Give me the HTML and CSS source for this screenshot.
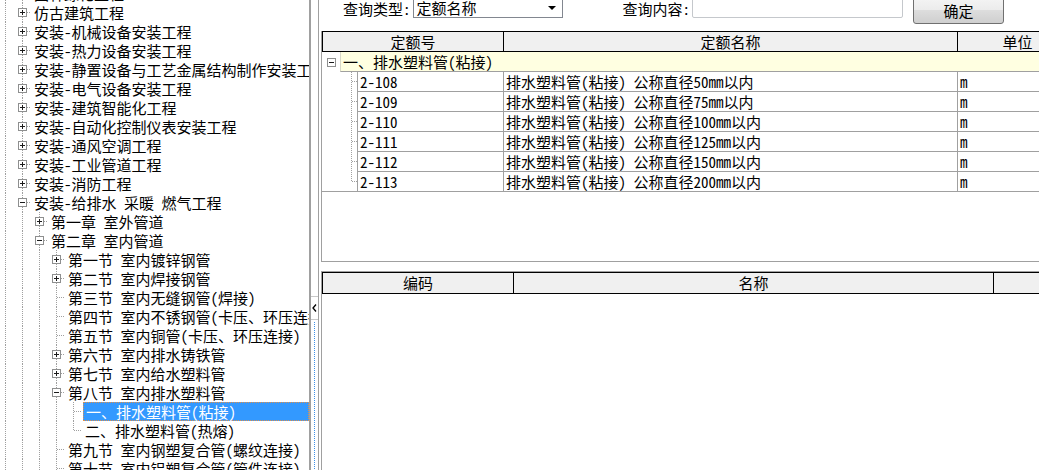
FILE: index.html
```html
<!DOCTYPE html>
<html lang="zh-CN">

<head>
    <meta charset="UTF-8">
    <title>定额查询</title>
    <link rel="stylesheet" href="styles.css">
</head>

<body>
    <div class="app">

        <div class="tree">
            <div class="tree-list">
                <div class="node"><span class="g root line"></span><span class="x more"><span class="b plus"></span></span><span class="t">园林绿化工程</span></div>
                <div class="node"><span class="g root line"></span><span class="x more"><span class="b plus"></span></span><span class="t">仿古建筑工程</span></div>
                <div class="node"><span class="g root line"></span><span class="x more"><span class="b plus"></span></span><span class="t">安装-机械设备安装工程</span></div>
                <div class="node"><span class="g root line"></span><span class="x more"><span class="b plus"></span></span><span class="t">安装-热力设备安装工程</span></div>
                <div class="node"><span class="g root line"></span><span class="x more"><span class="b plus"></span></span><span class="t">安装-静置设备与工艺金属结构制作安装工程</span></div>
                <div class="node"><span class="g root line"></span><span class="x more"><span class="b plus"></span></span><span class="t">安装-电气设备安装工程</span></div>
                <div class="node"><span class="g root line"></span><span class="x more"><span class="b plus"></span></span><span class="t">安装-建筑智能化工程</span></div>
                <div class="node"><span class="g root line"></span><span class="x more"><span class="b plus"></span></span><span class="t">安装-自动化控制仪表安装工程</span></div>
                <div class="node"><span class="g root line"></span><span class="x more"><span class="b plus"></span></span><span class="t">安装-通风空调工程</span></div>
                <div class="node"><span class="g root line"></span><span class="x more"><span class="b plus"></span></span><span class="t">安装-工业管道工程</span></div>
                <div class="node"><span class="g root line"></span><span class="x more"><span class="b plus"></span></span><span class="t">安装-消防工程</span></div>
                <div class="node"><span class="g root line"></span><span class="x more"><span class="b"></span></span><span class="t">安装-给排水 采暖 燃气工程</span></div>

                <div class="node"><span class="g root line"></span><span class="g line"></span><span class="x more"><span class="b plus"></span></span><span class="t">第一章 室外管道</span></div>
                <div class="node"><span class="g root line"></span><span class="g line"></span><span class="x more"><span class="b"></span></span><span class="t">第二章 室内管道</span></div>

                <div class="node"><span class="g root line"></span><span class="g line"></span><span class="g line"></span><span class="x more"><span class="b plus"></span></span><span class="t">第一节 室内镀锌钢管</span></div>
                <div class="node"><span class="g root line"></span><span class="g line"></span><span class="g line"></span><span class="x more"><span class="b plus"></span></span><span class="t">第二节 室内焊接钢管</span></div>
                <div class="node"><span class="g root line"></span><span class="g line"></span><span class="g line"></span><span class="x more"></span><span class="t">第三节 室内无缝钢管(焊接)</span></div>
                <div class="node"><span class="g root line"></span><span class="g line"></span><span class="g line"></span><span class="x more"></span><span class="t">第四节 室内不锈钢管(卡压、环压连接)</span></div>
                <div class="node"><span class="g root line"></span><span class="g line"></span><span class="g line"></span><span class="x more"></span><span class="t">第五节 室内铜管(卡压、环压连接)</span></div>
                <div class="node"><span class="g root line"></span><span class="g line"></span><span class="g line"></span><span class="x more"><span class="b plus"></span></span><span class="t">第六节 室内排水铸铁管</span></div>
                <div class="node"><span class="g root line"></span><span class="g line"></span><span class="g line"></span><span class="x more"><span class="b plus"></span></span><span class="t">第七节 室内给水塑料管</span></div>
                <div class="node"><span class="g root line"></span><span class="g line"></span><span class="g line"></span><span class="x more"><span class="b"></span></span><span class="t">第八节 室内排水塑料管</span></div>

                <div class="node"><span class="g root line"></span><span class="g line"></span><span class="g line"></span><span class="g line"></span><span class="x more"></span><span class="t sel">一、排水塑料管(粘接)</span></div>
                <div class="node"><span class="g root line"></span><span class="g line"></span><span class="g line"></span><span class="g line"></span><span class="x"></span><span class="t">二、排水塑料管(热熔)</span></div>

                <div class="node"><span class="g root line"></span><span class="g line"></span><span class="g line"></span><span class="x more"></span><span class="t">第九节 室内钢塑复合管(螺纹连接)</span></div>
                <div class="node"><span class="g root line"></span><span class="g line"></span><span class="g line"></span><span class="x more"></span><span class="t">第十节 室内铝塑复合管(管件连接)</span></div>
            </div>
        </div>

        <div class="split">
            <div class="split-top"></div>
            <div class="collapse">
                <svg width="5" height="8" viewBox="0 0 5 8"><path d="M4 0.5 L1 4 L4 7.5" fill="none" stroke="#000" stroke-width="1.3" /></svg>
            </div>
            <div class="dots"></div>
        </div>

        <div class="main">
            <div class="query">
                <span class="q-label">查询类型:</span>
                <div class="select">
                    <span class="select-text">定额名称</span>
                    <span class="arrow"></span>
                </div>
                <span class="q-label second">查询内容:</span>
                <div class="input"></div>
                <div class="btn">确定</div>
            </div>

            <div class="upper">
                <div class="thead">
                    <div class="th">定额号</div>
                    <div class="th">定额名称</div>
                    <div class="th">单位</div>
                </div>
                <div class="grp">
                    <div class="gx"><span class="b"></span></div>
                    <div class="gname">一、排水塑料管(粘接)</div>
                </div>
                <div class="row"><div class="tr more"></div><div class="td">2-108</div><div class="td">排水塑料管(粘接) 公称直径50mm以内</div><div class="td">m</div></div>
                <div class="row"><div class="tr more"></div><div class="td">2-109</div><div class="td">排水塑料管(粘接) 公称直径75mm以内</div><div class="td">m</div></div>
                <div class="row"><div class="tr more"></div><div class="td">2-110</div><div class="td">排水塑料管(粘接) 公称直径100mm以内</div><div class="td">m</div></div>
                <div class="row"><div class="tr more"></div><div class="td">2-111</div><div class="td">排水塑料管(粘接) 公称直径125mm以内</div><div class="td">m</div></div>
                <div class="row"><div class="tr more"></div><div class="td">2-112</div><div class="td">排水塑料管(粘接) 公称直径150mm以内</div><div class="td">m</div></div>
                <div class="row last"><div class="tr"></div><div class="td">2-113</div><div class="td">排水塑料管(粘接) 公称直径200mm以内</div><div class="td">m</div></div>
            </div>

            <div class="lower">
                <div class="lhead">
                    <div class="th">编码</div>
                    <div class="th">名称</div>
                    <div class="th"></div>
                </div>
            </div>
        </div>

    </div>
</body>

</html>
```

FILE: styles.css
```css
* {
    margin: 0;
    padding: 0;
    box-sizing: border-box;
}

body {
    width: 1039px;
    height: 470px;
    overflow: hidden;
    background: #fff;
    color: #000;
    font-family: "Noto Sans Mono CJK SC", "Noto Sans CJK SC", sans-serif;
    font-size: 15px;
}

.app {
    display: flex;
    height: 470px;
}

/* left tree */
.tree {
    width: 309px;
    flex: none;
    overflow: hidden;
}

.tree-list {
    margin-top: -16px;
}

.node {
    display: flex;
    height: 19px;
    line-height: 19px;
    white-space: pre;
}

.g {
    flex: none;
    width: 17px;
    height: 19px;
}

.g.root {
    width: 14px;
}

.g.line {
    background: repeating-linear-gradient(to bottom, #a0a0a0 0 1px, transparent 1px 2px) 8px 0 / 1px 100% no-repeat;
}

.g.root.line {
    background-position: 5px 0;
}

.x {
    flex: none;
    width: 17px;
    height: 19px;
    display: flex;
    align-items: center;
    justify-content: center;
    background:
        repeating-linear-gradient(to bottom, #a0a0a0 0 1px, transparent 1px 2px) 8px 0 / 1px 10px no-repeat,
        repeating-linear-gradient(to right, #a0a0a0 0 1px, transparent 1px 2px) 9px 9px / 8px 1px no-repeat;
}

.x.more {
    background:
        repeating-linear-gradient(to bottom, #a0a0a0 0 1px, transparent 1px 2px) 8px 0 / 1px 100% no-repeat,
        repeating-linear-gradient(to right, #a0a0a0 0 1px, transparent 1px 2px) 9px 9px / 8px 1px no-repeat;
}

.b {
    width: 9px;
    height: 9px;
    flex: none;
    border: 1px solid #8e8f8f;
    background: linear-gradient(#1c1c1c, #1c1c1c) center / 5px 1px no-repeat, #fff;
}

.b.plus {
    background:
        linear-gradient(#1c1c1c, #1c1c1c) center / 5px 1px no-repeat,
        linear-gradient(#1c1c1c, #1c1c1c) center / 1px 5px no-repeat,
        #fff;
}

.t {
    flex: none;
    padding: 0 2px 0 3px;
}

.t.sel {
    flex: 1;
    margin-left: 1px;
    padding-left: 2px;
    background: #3399ff;
    color: #fff;
    border: 1px dotted #e0904a;
    line-height: 17px;
}

/* splitter */
.split {
    width: 10px;
    flex: none;
    border-left: 2px solid #a0a0a0;
    border-right: 1px solid #a0a0a0;
    display: flex;
    flex-direction: column;
}

.split-top {
    height: 296px;
}

.collapse {
    height: 24px;
    border-top: 1px solid #c8c8c8;
    border-bottom: 1px solid #c8c8c8;
    display: flex;
    align-items: center;
    justify-content: center;
}

.dots {
    flex: 1;
    background: repeating-linear-gradient(to bottom, #3c8fe8 0 1px, transparent 1px 2px) 3px 2px / 1px 100% no-repeat;
}

/* right side */
.main {
    flex: 1;
    min-width: 0;
    display: flex;
    flex-direction: column;
    overflow: hidden;
    padding-left: 2px;
}

.query {
    height: 34px;
    margin-top: -3px;
    flex: none;
    display: flex;
    align-items: flex-start;
    padding-left: 22px;
}

.q-label {
    line-height: 24px;
    margin-right: 2px;
    white-space: nowrap;
}

.q-label.second {
    margin-left: 60px;
}

.select {
    width: 150px;
    height: 20px;
    margin-top: 1px;
    border: 1px solid #828790;
    display: flex;
    align-items: center;
    justify-content: space-between;
    padding: 0 6px 0 3px;
    line-height: 18px;
}

.arrow {
    width: 0;
    height: 0;
    border-left: 4px solid transparent;
    border-right: 4px solid transparent;
    border-top: 4px solid #000;
}

.input {
    width: 211px;
    height: 21px;
    border: 1px solid #c5c8cc;
    border-radius: 2px;
}

.btn {
    width: 91px;
    height: 27px;
    margin-left: 10px;
    border: 1px solid #707070;
    border-radius: 3px;
    background: linear-gradient(#f4f4f4 0, #ebebeb 50%, #dddddd 50%, #cfcfcf 100%);
    text-align: center;
    line-height: 26px;
}

.upper {
    height: 231px;
    flex: none;
    border-left: 1px solid #a0a0a0;
    border-bottom: 1px solid #a0a0a0;
    overflow: hidden;
}

.thead {
    display: grid;
    grid-template-columns: 181px 454px 120px;
    width: 756px;
    height: 21px;
    border: 1px solid #000;
    border-right: none;
    background: #f0f0f0;
}

.th {
    border-right: 1px solid #000;
    text-align: center;
    line-height: 19px;
    white-space: nowrap;
    overflow: hidden;
}

.grp {
    display: flex;
    height: 20px;
    width: 756px;
}

.gx {
    width: 18px;
    flex: none;
    display: flex;
    align-items: center;
    padding-left: 5px;
}

.gname {
    flex: 1;
    background: #ffffe1;
    border-left: 1px solid #d8d8c8;
    border-bottom: 1px solid #a0a0a0;
    padding-left: 2px;
    line-height: 19px;
    white-space: nowrap;
}

.row {
    display: grid;
    grid-template-columns: 35px 146px 454px 120px;
    width: 756px;
    height: 20px;
}

.tr {
    background:
        repeating-linear-gradient(to bottom, #a0a0a0 0 1px, transparent 1px 2px) 29px 0 / 1px 10px no-repeat,
        repeating-linear-gradient(to right, #a0a0a0 0 1px, transparent 1px 2px) 30px 9px / 5px 1px no-repeat;
}

.tr.more {
    background:
        repeating-linear-gradient(to bottom, #a0a0a0 0 1px, transparent 1px 2px) 29px 0 / 1px 100% no-repeat,
        repeating-linear-gradient(to right, #a0a0a0 0 1px, transparent 1px 2px) 30px 9px / 5px 1px no-repeat;
}

.row.last .tr {
    border-bottom: 1px solid #a0a0a0;
}

.td {
    border-left: 1px solid #a0a0a0;
    border-bottom: 1px solid #a0a0a0;
    padding-left: 2px;
    line-height: 19px;
    white-space: pre;
    overflow: hidden;
}

.lower {
    flex: 1;
    margin-top: 9px;
    border-top: 1px solid #a0a0a0;
    border-left: 1px solid #a0a0a0;
    overflow: hidden;
}

.lhead {
    display: grid;
    grid-template-columns: 191px 480px 100px;
    width: 772px;
    height: 22px;
    border: 1px solid #000;
    border-right: none;
    background: #f0f0f0;
}

.lhead .th {
    line-height: 20px;
}
```
